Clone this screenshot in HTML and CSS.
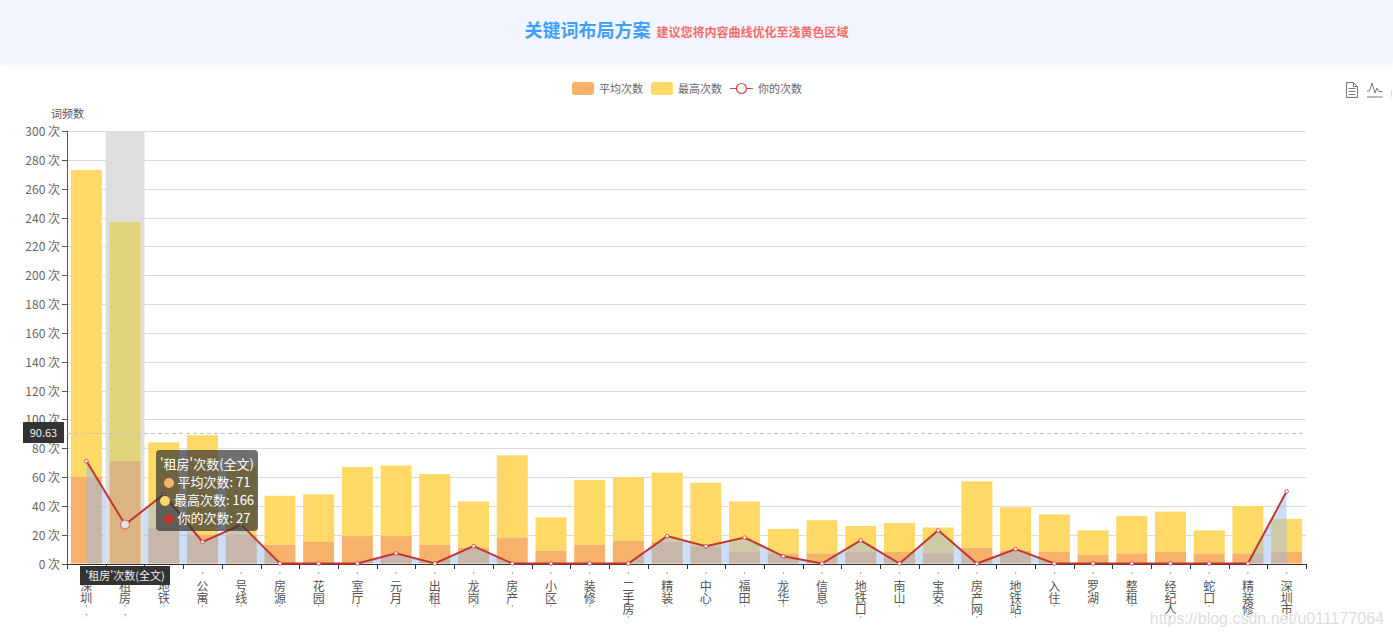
FILE: index.html
```html
<!DOCTYPE html>
<html lang="zh-CN">
<head>
  <meta charset="UTF-8">
  <title>关键词布局方案</title>
  <link rel="stylesheet" href="styles.css">
</head>
<body>
  <header class="page-header">
    <h1>关键词布局方案</h1>
    <span class="hint">建议您将内容曲线优化至浅黄色区域</span>
  </header>

  <div class="chart-wrap">
    <div class="chart-top">
      <ul class="legend">
        <li><i class="swatch swatch-avg"></i>平均次数</li>
        <li><i class="swatch swatch-max"></i>最高次数</li>
        <li>
          <svg class="swatch-line" width="23" height="13" viewBox="0 0 23 13">
            <path d="M0 6.5H23" stroke="#c9494a" fill="none"/>
            <circle cx="11.5" cy="6.5" r="5" fill="#fff" stroke="#c9494a" stroke-width="1.2"/>
          </svg>你的次数
        </li>
      </ul>
      <div class="toolbox">
        <svg width="14" height="18" viewBox="0 0 14 18" fill="none" stroke="#777">
          <path d="M1.5 1.5H8.5L12.5 5.5V16.5H1.5Z"/>
          <path d="M8.5 1.5V5.5H12.5M3.5 7.5H10.5M3.5 10.5H10.5M3.5 13.5H10.5"/>
        </svg>
        <svg width="16" height="18" viewBox="0 0 16 18" fill="none" stroke="#777">
          <path d="M0 10H2.5L5 2L8 12L10 7L12 10.5H15.5"/>
          <path d="M0 16H15.5"/>
        </svg>
        <svg width="14" height="18" viewBox="0 0 14 18" fill="none" stroke="#ddd">
          <path d="M0.5 9V16"/>
        </svg>
      </div>
    </div>

    <svg id="chart" class="chart" width="1393" height="533" viewBox="0 105 1393 533"></svg>

    <div class="value-label">90.63</div>
    <div class="axis-label">'租房'次数(全文)</div>
    <div class="tooltip">
      <div>'租房'次数(全文)</div>
      <div><i class="dot dot-avg"></i>平均次数: 71</div>
      <div><i class="dot dot-max"></i>最高次数: 166</div>
      <div><i class="dot dot-you"></i>你的次数: 27</div>
    </div>
  </div>

  <div class="watermark">https://blog.csdn.net/u011177064</div>

  <script src="chart.js"></script>
</body>
</html>
```

FILE: styles.css
```css
/* General styles */
html, body {
  margin: 0;
  padding: 0;
  height: 638px;
  overflow: hidden;
}

body {
  position: relative;
  background: #ffffff;
  font-family: "Noto Sans CJK SC", "Liberation Sans", sans-serif;
  color: #666666;
}

/* Header */
.page-header {
  height: 62px;
  background: #f2f5fd;
  box-shadow: 0 2px 6px rgba(0, 0, 0, 0.08);
  display: flex;
  justify-content: center;
  align-items: center;
  gap: 6px;
  padding-right: 20px;
}

.page-header h1 {
  margin: 0 0 4px;
  font-size: 18px;
  font-weight: 700;
  color: #409eff;
}

.hint {
  font-size: 12px;
  font-weight: 700;
  color: #f56c6c;
}

/* Legend and toolbox */
.chart-wrap {
  position: relative;
}

.chart-top {
  height: 43px;
  box-sizing: border-box;
  padding: 19px 0 0 572px;
  display: flex;
  justify-content: space-between;
}

.legend {
  list-style: none;
  margin: 0;
  padding: 0;
  display: flex;
  gap: 8px;
  font-size: 11px;
  line-height: 14px;
  height: 14px;
}

.legend li {
  display: flex;
  align-items: center;
  gap: 5px;
}

.swatch {
  display: block;
  width: 22px;
  height: 13px;
  border-radius: 3px;
}

.swatch-avg {
  background: #f6b26b;
}

.swatch-max {
  background: #ffd966;
}

.toolbox {
  display: flex;
  gap: 8px;
  margin-right: -12px;
  width: 60px;
}

.chart {
  display: block;
}

.chart text {
  font-family: "Noto Sans CJK SC", "Liberation Sans", sans-serif;
}

/* Overlays on the chart */
.value-label {
  position: absolute;
  left: 23px;
  top: 360px;
  width: 41px;
  height: 21px;
  line-height: 21px;
  background: #333333;
  color: #eeeeee;
  font-size: 11px;
  text-align: center;
}

.axis-label {
  position: absolute;
  left: 80px;
  top: 504px;
  width: 90px;
  height: 19px;
  line-height: 19px;
  background: #333333;
  color: #eeeeee;
  font-size: 11px;
  text-align: center;
}

.tooltip {
  position: absolute;
  left: 156px;
  top: 388px;
  width: 102px;
  height: 81px;
  box-sizing: border-box;
  padding-top: 5px;
  border-radius: 4px;
  background: rgba(50, 50, 50, 0.7);
  color: #ffffff;
  font-size: 13px;
  line-height: 18px;
  text-align: center;
  white-space: nowrap;
}

.dot {
  display: inline-block;
  width: 10px;
  height: 10px;
  border-radius: 50%;
  margin-right: 4px;
  vertical-align: -1px;
}

.dot-avg {
  background: #f6b26b;
}

.dot-max {
  background: #ffd966;
}

.dot-you {
  background: #c23531;
}

.watermark {
  position: absolute;
  right: 9px;
  top: 610px;
  font-family: "Liberation Sans", Arial, sans-serif;
  font-size: 16px;
  color: rgba(190, 190, 190, 0.55);
}
```

FILE: chart.js
```js
// name, orange bar, top of the yellow bar, line value
const rows = [
  ["深圳", 60, 273, 71], ["租房", 71, 237, 27], ["地铁", 25, 84, 48], ["公寓", 20, 89, 15],
  ["号线", 20, 67, 27], ["房源", 13, 47, 0], ["花园", 15, 48, 0], ["室厅", 19, 67, 0],
  ["元月", 19, 68, 7], ["出租", 13, 62, 0], ["龙岗", 11, 43, 12], ["房产", 18, 75, 0],
  ["小区", 9, 32, 0], ["装修", 13, 58, 0], ["二手房", 16, 60, 0], ["精装", 15, 63, 19],
  ["中心", 12, 56, 12], ["福田", 8, 43, 18], ["龙华", 7, 24, 5], ["信息", 7, 30, 0],
  ["地铁口", 8, 26, 16], ["南山", 8, 28, 0], ["宝安", 7, 25, 23], ["房产网", 11, 57, 0],
  ["地铁站", 9, 39, 10], ["入住", 8, 34, 0], ["罗湖", 6, 23, 0], ["整租", 7, 33, 0],
  ["经纪人", 8, 36, 0], ["蛇口", 7, 23, 0], ["精装修", 7, 40, 0], ["深圳市", 8, 31, 50]
];

const plotLeft = 67, plotRight = 1306, plotTop = 131, plotBottom = 563.5;
const band = (plotRight - plotLeft) / rows.length;
const barWidth = 31;
const y = v => plotBottom - (v / 300) * (plotBottom - plotTop);
const cx = i => plotLeft + band * (i + 0.5);

const bar = (i, from, to, fill) => {
  const x = cx(i) - barWidth / 2;
  return `<rect x="${x}" y="${y(to)}" width="${barWidth}" height="${y(from) - y(to)}" fill="${fill}"/>`;
};

let out = "";
let ticks = "";

// Grid and y axis labels
for (let v = 0; v <= 300; v += 20) {
  const py = Math.round(y(v)) + 0.5;
  if (v > 0) out += `<path d="M${plotLeft} ${py}H${plotRight}" stroke="#dcdcdc"/>`;
  ticks += `<path d="M${plotLeft - 5} ${py}H${plotLeft}" stroke="#555"/>`;
  out += `<text x="${plotLeft - 7}" y="${py + 4}" text-anchor="end" font-size="12" fill="#666">${v} 次</text>`;
}
out += `<text x="51" y="117.5" font-size="11" fill="#555">词频数</text>`;

// Bars
rows.forEach((r, i) => {
  out += bar(i, r[1], r[2], "#ffd966");
  out += bar(i, 0, r[1], "#f6b26b");
});

// Area under the line
const pts = rows.map((r, i) => `${cx(i).toFixed(1)} ${y(r[3]).toFixed(1)}`).join("L");
out += `<path d="M${cx(0)} ${plotBottom}L${pts}L${cx(rows.length - 1)} ${plotBottom}Z" fill="rgba(149,186,238,0.48)"/>`;

// Hover band on the second category hides the area behind it
out += `<rect x="${plotLeft + band}" y="${plotTop}" width="${band}" height="${plotBottom - plotTop}" fill="#dedede"/>`;
out += bar(1, rows[1][1], rows[1][2], "#e0d47a");
out += bar(1, 0, rows[1][1], "#dcb383");

// Axes
out += ticks;
out += `<path d="M${plotLeft + 0.5} ${plotTop}V${plotBottom + 1}" stroke="#555"/>`;
out += `<path d="M${plotLeft} 564.5H${plotRight}" stroke="#333"/>`;
for (let i = 0; i <= rows.length; i++) {
  const px = Math.round(plotLeft + band * i) + 0.5;
  out += `<path d="M${px} 564V569" stroke="#333"/>`;
}

// Line and points
out += `<path d="M${pts}" fill="none" stroke="#c23531" stroke-width="2"/>`;
rows.forEach((r, i) => {
  const big = i === 1;
  out += `<circle cx="${cx(i)}" cy="${y(r[3])}" r="${big ? 4.5 : 1.8}" fill="${big ? "#e2e2e2" : "#fff"}" stroke="#d0585a" stroke-width="1"/>`;
});

// Category labels, one character per line between small quote marks
rows.forEach((r, i) => {
  const px = cx(i);
  const chars = [...r[0]];
  const label = (ch, py, size, fill) => `<text x="${px}" y="${py}" text-anchor="middle" font-size="${size}" fill="${fill}">${ch}</text>`;
  out += label("'", 578.5, 8, "#777");
  chars.forEach((ch, n) => { out += label(ch, 591 + n * 11.5, 12, "#555"); });
  out += label("'", 588.5 + chars.length * 11.5, 8, "#777");
  if (i < 2) out += label(",", 615, 8, "#777");
});

// Hovered value line
out += `<path d="M${plotLeft} 433.5H${plotRight}" stroke="#c4c4c4" stroke-dasharray="4 3"/>`;

document.getElementById("chart").innerHTML = out;
```
